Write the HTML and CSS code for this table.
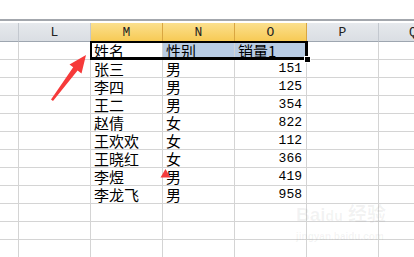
FILE: index.html
```html
<!DOCTYPE html>
<html lang="zh">
<head>
<meta charset="utf-8">
<link rel="stylesheet" href="styles.css">
</head>
<body>
<div class="page">
  <div class="topbar"></div>
  <div class="sheet">
    <div class="hd"></div>
    <div class="hd">L</div>
    <div class="hd sel">M</div>
    <div class="hd sel">N</div>
    <div class="hd sel">O</div>
    <div class="hd">P</div>
    <div class="hd last">Q</div>

    <div class="c"></div><div class="c"></div><div class="c t">姓名</div><div class="c t hl">性别</div><div class="c t hl">销量1</div><div class="c"></div><div class="c"></div>
    <div class="c"></div><div class="c"></div><div class="c t">张三</div><div class="c t">男</div><div class="c n">151</div><div class="c"></div><div class="c"></div>
    <div class="c"></div><div class="c"></div><div class="c t">李四</div><div class="c t">男</div><div class="c n">125</div><div class="c"></div><div class="c"></div>
    <div class="c"></div><div class="c"></div><div class="c t">王二</div><div class="c t">男</div><div class="c n">354</div><div class="c"></div><div class="c"></div>
    <div class="c"></div><div class="c"></div><div class="c t">赵倩</div><div class="c t">女</div><div class="c n">822</div><div class="c"></div><div class="c"></div>
    <div class="c"></div><div class="c"></div><div class="c t">王欢欢</div><div class="c t">女</div><div class="c n">112</div><div class="c"></div><div class="c"></div>
    <div class="c"></div><div class="c"></div><div class="c t">王晓红</div><div class="c t">女</div><div class="c n">366</div><div class="c"></div><div class="c"></div>
    <div class="c"></div><div class="c"></div><div class="c t">李煜</div><div class="c t">男</div><div class="c n">419</div><div class="c"></div><div class="c"></div>
    <div class="c"></div><div class="c"></div><div class="c t">李龙飞</div><div class="c t">男</div><div class="c n">958</div><div class="c"></div><div class="c"></div>
    <div class="c"></div><div class="c"></div><div class="c"></div><div class="c"></div><div class="c"></div><div class="c"></div><div class="c"></div>
    <div class="c"></div><div class="c"></div><div class="c"></div><div class="c"></div><div class="c"></div><div class="c"></div><div class="c"></div>
    <div class="c"></div><div class="c"></div><div class="c"></div><div class="c"></div><div class="c"></div><div class="c"></div><div class="c"></div>
  </div>

  <div class="selection"></div>
  <div class="handle"></div>

  <div class="watermark">
    <div class="wm-logo">Bai<span class="paw">du</span> 经验</div>
    <div class="wm-url">jingyan.baidu.com</div>
  </div>

  <svg class="marks" width="414" height="257" viewBox="0 0 414 257">
    <polygon points="86,55 81.5,73.5 77.6,70.6 53,101 51,99.5 73.2,67.2 69.5,64.5" fill="#f63a3a"/>
    <polygon points="165.5,169 170.5,177.5 160.5,177.5" fill="#f53d3d"/>
  </svg>
</div>
</body>
</html>
```

FILE: styles.css
```css
html, body {
  margin: 0;
  padding: 0;
  background: #ffffff;
}

.page {
  position: relative;
  width: 414px;
  height: 257px;
  overflow: hidden;
  background: #ffffff;
}

.topbar {
  height: 19px;
  border-bottom: 2px solid #a3a7ad;
  margin-bottom: 2px;
  background: #ffffff;
}

.sheet {
  display: grid;
  grid-template-columns: 19px 72px 72px 72px 72px 72px 1fr;
  grid-template-rows: 19px;
  grid-auto-rows: 18px;
}

.hd {
  box-sizing: border-box;
  border-right: 1px solid #c3c8cf;
  border-bottom: 1px solid #9ea6b0;
  background: linear-gradient(#e6e9ed, #dadee3);
  font-family: "Liberation Mono", "DejaVu Sans Mono", monospace;
  font-size: 13px;
  color: #222222;
  display: flex;
  align-items: center;
  justify-content: center;
  line-height: 15px;
}

.hd.sel {
  background: linear-gradient(#fbe08e, #f7ca55);
  border-right-color: #d9a641;
  border-bottom-color: #e4a53b;
}

.hd.last {
  border-right: none;
  justify-content: flex-start;
  padding-left: 30px;
}

.c {
  box-sizing: border-box;
  border-right: 1px solid #d4d4d4;
  border-bottom: 1px solid #d4d4d4;
  display: flex;
  align-items: center;
  color: #000000;
  white-space: nowrap;
  overflow: hidden;
}

.c.t {
  font-family: "Noto Sans CJK SC", "Liberation Sans", sans-serif;
  font-size: 15px;
  padding-left: 3px;
  line-height: 17px;
}

.c.n {
  font-family: "Liberation Mono", "DejaVu Sans Mono", monospace;
  font-size: 13px;
  justify-content: flex-end;
  padding-right: 4px;
  line-height: 15px;
}

.c.hl {
  background: #b8cce4;
}

.selection {
  position: absolute;
  left: 90px;
  top: 41px;
  width: 218px;
  height: 19px;
  box-sizing: border-box;
  border: 2px solid #000000;
  border-right-width: 3px;
  border-bottom-width: 3px;
}

.handle {
  position: absolute;
  left: 304px;
  top: 56px;
  width: 5px;
  height: 5px;
  background: #000000;
  border: 1px solid #ffffff;
}

.watermark {
  position: absolute;
  left: 296px;
  top: 204px;
  width: 100px;
  color: rgba(120, 120, 120, 0.09);
  font-family: "Liberation Sans", "Noto Sans CJK SC", sans-serif;
}

.wm-logo {
  font-size: 19px;
  font-weight: bold;
  line-height: 22px;
}

.paw {
  font-size: 14px;
}

.wm-url {
  font-size: 10px;
  font-weight: bold;
  line-height: 12px;
  margin-top: 4px;
}

.marks {
  position: absolute;
  left: 0;
  top: 0;
  pointer-events: none;
}
```
